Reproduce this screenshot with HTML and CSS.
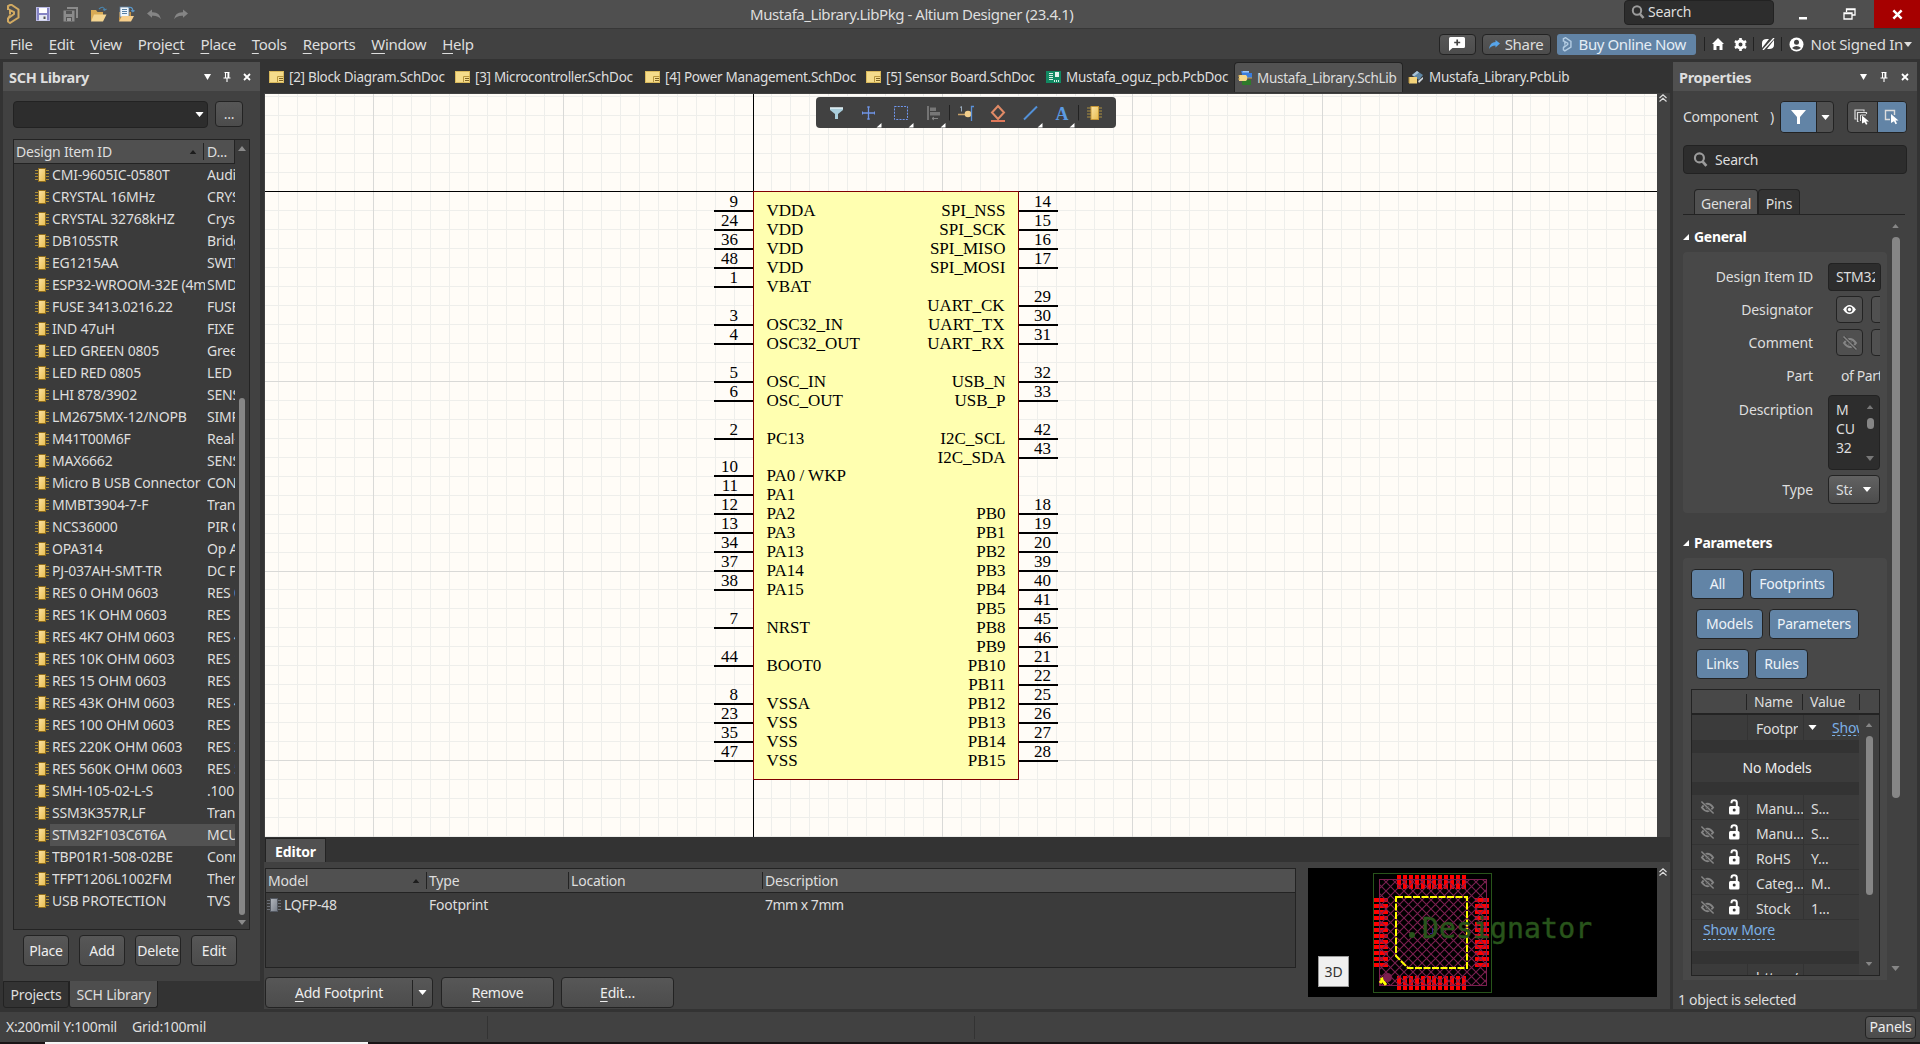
FILE: index.html
```html
<!DOCTYPE html>
<html lang="en">
<head>
<meta charset="utf-8">
<title>Mustafa_Library.LibPkg - Altium Designer (23.4.1)</title>
<link rel="stylesheet" href="styles.css">
</head>
<body>
<svg width="0" height="0" class="defs">
  <defs>
    <linearGradient id="gold" x1="0" y1="0" x2="1" y2="1"><stop offset="0" stop-color="#fbe3a4"/><stop offset="1" stop-color="#e9bd4e"/></linearGradient>
    <linearGradient id="steel" x1="0" y1="0" x2="1" y2="1"><stop offset="0" stop-color="#b4b8bf"/><stop offset="1" stop-color="#777d88"/></linearGradient>
    <pattern id="hatch" width="9" height="9" patternUnits="userSpaceOnUse"><path d="M0 0l9 9M9 0l-9 9" stroke="#7b1f50" stroke-width="1.1"/></pattern>
    <symbol id="chip" viewBox="0 0 14 14"><path d="M0 2.5h14M0 5.5h14M0 8.5h14M0 11.5h14" stroke="#a98b35"/><rect x="3.5" y=".5" width="7" height="13" fill="url(#gold)" stroke="#8f6d1d"/></symbol>
    <symbol id="chipgrey" viewBox="0 0 14 14"><path d="M0 2.5h14M0 5.5h14M0 8.5h14M0 11.5h14" stroke="#6b6f77"/><rect x="3.5" y=".5" width="7" height="13" fill="url(#steel)" stroke="#555a63"/></symbol>
    <symbol id="doc" viewBox="0 0 15 12"><rect x=".5" y=".5" width="14" height="11" fill="#f5dc8b" stroke="#d9b95c"/><path d="M8.500 11V5.500h6" fill="none" stroke="#b8963c"/><path d="M10 7.500h4M10 9.500h4" stroke="#7e6324"/></symbol>
    <symbol id="mag" viewBox="0 0 14 14"><circle cx="6" cy="5.500" r="4.200" fill="none" stroke="#9b9b9b" stroke-width="2"/><path d="M9 9l3.500 4" stroke="#9b9b9b" stroke-width="2.600"/></symbol>
    <symbol id="pin" viewBox="0 0 8 10"><path d="M1.500 .5h5M2.500 .5v5M5 .5v5.500M5.800 .5v5.500M.5 6h7M4 6v4" stroke="#fff" stroke-width="1.100" fill="none"/></symbol>
    <symbol id="close" viewBox="0 0 8 8"><path d="M1 1l6 6M7 1l-6 6" stroke="#fff" stroke-width="1.800"/></symbol>
    <symbol id="down" viewBox="0 0 10 6"><path d="M0 0h10l-5 6z" fill="currentColor"/></symbol>
    <symbol id="up" viewBox="0 0 10 6"><path d="M0 6h10l-5 -6z" fill="currentColor"/></symbol>
    <symbol id="eyeoff" viewBox="0 0 16 16"><path d="M2 8q6 -8 12 0q-6 8 -12 0z" fill="none" stroke="#858585" stroke-width="2"/><circle cx="8" cy="8" r="2" fill="#858585"/><path d="M2 2l12.500 12.500" stroke="#3b3b3b" stroke-width="3"/><path d="M1.500 1.500l13 13" stroke="#858585" stroke-width="1.600"/></symbol>
    <symbol id="eye" viewBox="0 0 14 12"><path d="M0 6q7 -10 14 0q-7 10 -14 0z" fill="#fff"/><circle cx="7" cy="6" r="3.300" fill="#505050"/><circle cx="7" cy="6" r="1.800" fill="#fff"/></symbol>
    <symbol id="lock" viewBox="0 0 12 16"><rect x="1" y="7" width="10.500" height="8.500" rx="1.500" fill="#fff"/><path d="M3.500 4.200V3.500q0-2.300 2.600-2.300t2.700 2.300V8" fill="none" stroke="#fff" stroke-width="2"/><circle cx="6.200" cy="11" r="1.500" fill="#333"/></symbol>
    <symbol id="chev" viewBox="0 0 8 8"><path d="M.5 4L4 .8 7.500 4M.5 7.500L4 4.300 7.500 7.500" stroke="#ddd" stroke-width="1.200" fill="none"/></symbol>
    <symbol id="fold" viewBox="0 0 7 7"><path d="M7 0v7H0z" fill="#fff"/></symbol>
    <symbol id="logo" viewBox="0 0 14 20"><path d="M2 6V2l3-1.500 7.500 5v8L4 19l-2-1.500v-3l6-4.500V8L4 6v4.500M2 14.500l2-3" fill="none" stroke="currentColor" stroke-width="2"/></symbol>
  </defs>
</svg>

<header class="titlebar">
  <div class="quick">
    <svg class="q-logo" width="14" height="20"><use href="#logo"/></svg>
    <svg width="14" height="14" viewBox="0 0 14 14"><rect x=".5" y=".5" width="13" height="13" fill="#8584c4" stroke="#b9b9e4"/><rect x="3" y="1" width="8" height="5" fill="#fff"/><rect x="3" y="8" width="8" height="5.500" fill="#e6e9f5"/><path d="M7.500 9.500v2.500h2v-2.500z" fill="#555"/></svg>
    <svg width="15" height="16" viewBox="0 0 15 16"><path d="M4 1h11v11h-2V3H4z" fill="#8b8b8b"/><rect x=".5" y="4.500" width="11" height="11" fill="#8b8b8b"/><path d="M3 5h6v3H3zM3 11h6v4H3z" fill="#555"/><path d="M4 12h4v3H4z" fill="#999"/></svg>
    <svg width="17" height="16" viewBox="0 0 17 16"><path d="M1 15V4h5l1.500 2H13v3" fill="#d9aa55"/><path d="M1 15.500L4 8.500h12.500L13 15.500z" fill="#f4d592"/><path d="M9 3q4-4 6 1l1.500-1M15 4.500l-2-1" fill="none" stroke="#4a86b0" stroke-width="1.100"/></svg>
    <svg width="17" height="16" viewBox="0 0 17 16"><path d="M1 15V6h12v5" fill="#c99443"/><rect x="2" y="1" width="9" height="10" fill="#eef5fb" stroke="#5c7c9c" stroke-width=".8"/><path d="M4 3.500h5M4 5.500h5M4 7.500h5" stroke="#5680a5"/><path d="M1 15.500l3-5.500h12L13 15.500z" fill="#f7cf8c"/><path d="M10.500 1.500q4-1.500 4.500 4l1.500-1M15 5.500l-2-1" fill="none" stroke="#5b9bd0" stroke-width="1.100"/></svg>
    <svg width="15" height="11" viewBox="0 0 15 11"><path d="M0 4.500L5 .5v2.800q7.500-.5 9 7-3-4-9-3.500v2z" fill="#858585"/></svg>
    <svg width="15" height="11" viewBox="0 0 15 11"><path d="M15 4.500L10 .5v2.800q-7.500-.5-9 7 3-4 9-3.500v2z" fill="#858585"/></svg>
  </div>
  <div class="apptitle">Mustafa_Library.LibPkg - Altium Designer (23.4.1)</div>
  <div class="winctl">
    <div class="tsearch"><svg width="14" height="14"><use href="#mag"/></svg>Search</div>
    <svg class="wmin" width="8" height="3"><rect width="8" height="2.500" fill="#fff"/></svg>
    <svg class="wres" width="13" height="12" viewBox="0 0 13 12"><path d="M3.500 4V1h8.500v6H9M3.500 1.500H12M1 5h8v6H1zM1 5.500h8" fill="none" stroke="#fff" stroke-width="1.300"/></svg>
    <div class="wclose"><svg width="11" height="11" viewBox="0 0 8 8"><use href="#close"/></svg></div>
  </div>
</header>

<nav class="menubar">
  <div class="menu"><span><u>F</u>ile</span><span><u>E</u>dit</span><span><u>V</u>iew</span><span>Proje<u>c</u>t</span><span><u>P</u>lace</span><span><u>T</u>ools</span><span><u>R</u>eports</span><span><u>W</u>indow</span><span><u>H</u>elp</span></div>
  <div class="account">
    <div class="btn note"><svg width="16" height="14" viewBox="0 0 16 14"><path d="M1.500 0h13q1.500 0 1.500 1.500v8q0 1.500-1.500 1.500H3.500L0 14V1.500Q0 0 1.500 0z" fill="#fff"/><path d="M8.200 2.500v6M5.200 5.500h6" stroke="#444" stroke-width="1.700"/></svg></div>
    <div class="btn share"><svg width="11" height="9" viewBox="0 0 11 9"><path d="M11 3.500L6.500 0v2Q1 2 0 9q2-3.500 6.500-3.500v2z" fill="#57a5ea"/></svg>Share</div>
    <div class="buy"><svg width="10" height="15" color="#b3cce2"><use href="#logo"/></svg>Buy Online Now</div>
    <i class="vsep"></i>
    <svg width="12" height="12" viewBox="0 0 12 12"><path d="M6 0l6 6h-1.500v6H7.500V8h-3v4h-3V6H0z" fill="#fff"/></svg>
    <svg class="gear" width="13" height="13" viewBox="0 0 13 13"><circle cx="6.500" cy="6.500" r="3.500" fill="none" stroke="#fff" stroke-width="3"/><path d="M6.500 0v3M6.500 10v3M.9 3.200l2.500 1.500M9.600 8.300l2.500 1.500M.9 9.800l2.500-1.500M9.600 4.700l2.500-1.500" stroke="#fff" stroke-width="2.600"/></svg>
    <i class="vsep"></i>
    <svg width="14" height="12" viewBox="0 0 14 12"><path d="M1 9V5q0-4 5-4l2 0-7 9zM13 3v4q0 4-5 4H6l7-9z" fill="#fff"/><path d="M2 12L13 0" stroke="#fff" stroke-width="1.300"/></svg>
    <i class="vsep"></i>
    <svg width="15" height="15" viewBox="0 0 15 15"><circle cx="7.500" cy="7.500" r="7" fill="#fff"/><circle cx="7.500" cy="5.200" r="2.500" fill="#414141"/><path d="M3 11q4.500-4 9 0-4.500 3.500-9 0z" fill="#414141"/></svg>
    <span class="signed">Not Signed In</span><svg width="8" height="5" viewBox="0 0 10 6"><use href="#down"/></svg>
  </div>
</nav>

<main class="work">
  <aside class="left">
    <section class="panel">
      <div class="phead"><b>SCH Library</b><svg width="7" height="6" viewBox="0 0 10 6" preserveAspectRatio="none"><path d="M0 0h10l-5 6z" fill="#fff"/></svg><svg width="8" height="10"><use href="#pin"/></svg><svg width="8" height="8"><use href="#close"/></svg></div>
      <div class="combo-row"><div class="combo"><svg width="9" height="5" viewBox="0 0 10 6"><use href="#down"/></svg></div><div class="btn dots">...</div></div>
      <div class="list">
        <div class="lmain">
          <div class="lhead"><span class="c1">Design Item ID<svg width="8" height="4" viewBox="0 0 10 6"><use href="#up"/></svg></span><span class="c2">D...</span></div>
          <div id="items"></div>
        </div>
        <div class="lscroll"><svg width="8" height="5" viewBox="0 0 10 6"><use href="#up"/></svg><i></i><svg width="8" height="5" viewBox="0 0 10 6"><use href="#down"/></svg></div>
      </div>
      <div class="lbtns"><div class="btn">Place</div><div class="btn">Add</div><div class="btn">Delete</div><div class="btn">Edit</div></div>
    </section>
    <div class="ptabs"><span>Projects</span><span class="on">SCH Library</span></div>
  </aside>

  <section class="center">
    <div class="doctabs">
      <span class="t1"><svg width="15" height="12"><use href="#doc"/></svg><em>[2] Block Diagram.SchDoc</em></span>
      <span class="t2"><svg width="15" height="12"><use href="#doc"/></svg><em>[3] Microcontroller.SchDoc</em></span>
      <span class="t3"><svg width="15" height="12"><use href="#doc"/></svg><em>[4] Power Management.SchDoc</em></span>
      <span class="t4"><svg width="15" height="12"><use href="#doc"/></svg><em>[5] Sensor Board.SchDoc</em></span>
      <span class="t5"><svg width="15" height="12" viewBox="0 0 15 12"><rect width="15" height="12" fill="#128a63"/><path d="M3 2.500h4M3 4.500h4M3 6.500h4M3 8.500h4" stroke="#d9efe6"/><path d="M9 1h4v5H9z" fill="#e5f2ec"/><path d="M8.500 9v2M10.500 9v2M12.500 9v2" stroke="#d9efe6"/></svg><em>Mustafa_oguz_pcb.PcbDoc</em></span>
      <span class="t6 on"><svg width="15" height="16" viewBox="0 0 15 16"><path d="M3 1h8v2h3v5H5z" fill="#3b7ddd"/><path d="M5 1h6v1.500H4z" fill="#9cc6f5"/><path d="M4 10h9v5H4z" fill="#2f7a2b"/><path d="M1 5h7q3 3 0 6H1z" fill="#f6d88a"/><path d="M0 6h2M0 9h2M10 8h4" stroke="#c9a24a"/></svg><em>Mustafa_Library.SchLib</em></span>
      <span class="t7"><svg width="16" height="14" viewBox="0 0 16 14"><path d="M4 5l5-4 6 4-4 5z" fill="#5f86a3"/><path d="M4 5l5-4 2 1.500-5 4z" fill="#a9c3d6"/><path d="M10 11l5-4v2l-4 4z" fill="#cfd8dd"/><rect x="1" y="7" width="8" height="6.500" fill="#f3d37a"/><path d="M0 8h2M0 10h2M0 12h2" stroke="#b58f3a"/></svg><em>Mustafa_Library.PcbLib</em></span>
    </div>
    <div class="sheet">
      <svg id="canvas" width="1392" height="743" viewBox="265 94 1392 743"></svg>
      <svg class="chev" width="8" height="8"><use href="#chev"/></svg>
      <div class="toolbar">
        <svg width="300" height="32" viewBox="0 0 300 32">
          <path d="M14 11h13v2l-5 4v5h-3v-5l-5-4z" fill="#a9cddb"/><path d="M14 11h13" stroke="#e6f3f8" stroke-width="1.500"/>
          <path d="M46 16h13M52.500 9.500v13" stroke="#6f94e6" stroke-width="1.300"/><path d="M46.500 14.500v3M58.500 14.500v3M51 10h3M51 22h3" stroke="#6f94e6"/>
          <rect x="78.500" y="9.500" width="13" height="13" fill="none" stroke="#7097ee" stroke-dasharray="2 1.200"/>
          <path d="M112 9v14" stroke="#858585" stroke-width="1.500"/><rect x="114" y="10.500" width="6" height="3.500" fill="#777"/><rect x="114" y="15" width="10" height="3.500" fill="#777"/><path d="M116 21.500h6M118 20l-2 1.500 2 1.500" fill="none" stroke="#858585"/>
          <path d="M133.500 8v15.500M262.500 8v15.500" stroke="#222"/>
          <path d="M142 17.500h8" stroke="#c9a268" stroke-width="1.500"/><circle cx="152" cy="17" r="3.300" fill="#f3cf8c"/><path d="M158 9.500h-2.500v14.500" fill="none" stroke="#5a90d8" stroke-width="1.300"/><path d="M144 10.500l1.500-1v5" fill="none" stroke="#9ab"/>
          <path d="M182 9l6 6.500-6 6.500-6-6.500z" fill="none" stroke="#e08a66" stroke-width="2"/><path d="M175 24h14" stroke="#e0785a" stroke-width="2"/>
          <path d="M208 22.500l13-13" stroke="#5290d8" stroke-width="2"/>
          <text x="246" y="23" text-anchor="middle" class="tool-a">A</text>
          <path d="M271 11h15M271 14h15M271 17h15M271 20h15" stroke="#ad9140"/><rect x="275" y="9.500" width="7.500" height="13" fill="url(#gold)" stroke="#c79837"/>
          <path d="M65.500 26v4.500h-5zM97.500 26v4.500h-5zM129.500 26v4.500h-5zM226.500 26v4.500h-5zM258.500 26v4.500h-5z" fill="#fff"/>
        </svg>
      </div>
    </div>
    <div class="edtabs"><b>Editor</b></div>
    <div class="editor">
      <div class="models">
        <div class="mtable">
          <div class="mhead"><span class="m1">Model<svg width="8" height="4" viewBox="0 0 10 6"><use href="#up"/></svg></span><span class="m2">Type</span><span class="m3">Location</span><span class="m4">Description</span></div>
          <div class="mrow"><span class="m1"><svg width="14" height="14"><use href="#chipgrey"/></svg>LQFP-48</span><span class="m2">Footprint</span><span class="m3"></span><span class="m4">7mm x 7mm</span></div>
        </div>
        <div class="mbtns"><div class="btn addfp"><span><u>A</u>dd Footprint</span><i><svg width="9" height="5" viewBox="0 0 10 6"><use href="#down"/></svg></i></div><div class="btn"><span><u>R</u>emove</span></div><div class="btn"><span><u>E</u>dit...</span></div></div>
      </div>
      <div class="preview"><svg id="footprint" width="349" height="129" viewBox="1308 868 349 129"></svg><span class="td">3D</span></div>
      <svg class="chev" width="8" height="8"><use href="#chev"/></svg>
    </div>
  </section>

  <aside class="right">
    <div class="phead"><b>Properties</b><svg width="7" height="6" viewBox="0 0 10 6" preserveAspectRatio="none"><path d="M0 0h10l-5 6z" fill="#fff"/></svg><svg width="8" height="10"><use href="#pin"/></svg><svg width="8" height="8"><use href="#close"/></svg></div>
    <div class="scope"><span class="comp">Component</span><span class="par">)</span>
      <div class="split f"><i class="blue"><svg width="15" height="14" viewBox="0 0 15 14"><path d="M0 0h15L9 7v7H6V7z" fill="#fff"/></svg></i><i><svg width="9" height="5" viewBox="0 0 10 6"><use href="#down"/></svg></i></div>
      <div class="split s"><i><svg width="16" height="16" viewBox="0 0 16 16"><path d="M2.500 10H1V1h9v1.500M4.500 12.500H3.500V3.500h9v1.500" fill="none" stroke="#ddd" stroke-width="1.200"/><path d="M6.500 12V6H12" fill="none" stroke="#ddd"/><path d="M8 6.500l7 6h-3l1.500 2.500-1.500.8-1.500-2.500L8 14.500z" fill="#fff"/></svg></i><i class="blue"><svg width="16" height="16" viewBox="0 0 16 16"><path d="M6 10.500H1.500V1.500h9V6" fill="none" stroke="#ddd" stroke-width="1.400"/><path d="M7 5l7.500 6.500h-3l1.500 3-1.500.8-1.500-3L7 14z" fill="#fff"/></svg></i></div>
    </div>
    <div class="psearch"><svg width="15" height="15" viewBox="0 0 14 14"><use href="#mag"/></svg>Search</div>
    <div class="rtabs"><span class="on">General</span><span>Pins</span></div>
    <div class="rbody">
      <div class="rcols">
        <h3><svg width="6" height="6" viewBox="0 0 7 7"><use href="#fold"/></svg>General</h3>
        <div class="box form">
          <div class="fr"><label>Design Item ID</label><div class="inp">STM32F103</div></div>
          <div class="fr"><label>Designator</label><div class="clip"><i class="sq"><svg width="13" height="11" viewBox="0 0 14 12"><use href="#eye"/></svg></i><i class="sq"><svg width="12" height="16"><use href="#lock"/></svg></i></div></div>
          <div class="fr"><label>Comment</label><div class="clip"><i class="sq"><svg width="16" height="16" viewBox="0 0 16 16"><use href="#eyeoff"/></svg></i><i class="sq"><svg width="12" height="16"><use href="#lock"/></svg></i></div></div>
          <div class="fr"><label>Part</label><div class="clip ofp">of Parts</div></div>
          <div class="fr tall"><label>Description</label><div class="area"><span>M<br>CU<br>32</span><div class="mini"><svg width="8" height="4" viewBox="0 0 10 6"><use href="#up"/></svg><i></i><svg width="8" height="5" viewBox="0 0 10 6"><use href="#down"/></svg></div></div></div>
          <div class="fr"><label>Type</label><div class="sel"><span>Standard</span><svg width="10" height="5" viewBox="0 0 10 6"><use href="#down"/></svg></div></div>
        </div>
        <h3 class="second"><svg width="6" height="6" viewBox="0 0 7 7"><use href="#fold"/></svg>Parameters</h3>
        <div class="box params">
          <div class="chips r1"><b class="w53">All</b><b class="w84">Footprints</b></div>
          <div class="chips"><b class="w67">Models</b><b class="w90">Parameters</b></div>
          <div class="chips"><b class="w53">Links</b><b class="w53">Rules</b></div>
          <div class="ptable">
            <div class="pth"><span></span><span>Name</span><span>Value</span><span></span></div>
            <div class="ptb">
              <div class="ptrows">
                <div class="pr fp"><span class="a"></span><span class="n"><em>Footprint</em></span><span class="v"><svg width="9" height="5" viewBox="0 0 10 6"><use href="#down"/></svg><a>Show</a></span></div>
                <div class="nom">No Models</div>
                <div id="params"></div>
                <div class="more"><a>Show More</a></div>
                <div class="pr last"><span class="a"></span><span class="n">https:/...</span><span class="v">:...</span></div>
              </div>
              <div class="pscroll"><svg width="8" height="4" viewBox="0 0 10 6"><use href="#up"/></svg><i></i><svg width="8" height="4" viewBox="0 0 10 6"><use href="#down"/></svg></div>
            </div>
          </div>
        </div>
      </div>
      <div class="rscroll"><svg width="9" height="4" viewBox="0 0 10 6"><use href="#up"/></svg><i></i><svg width="9" height="5" viewBox="0 0 10 6"><use href="#down"/></svg></div>
    </div>
    <div class="selinfo">1 object is selected</div>
  </aside>
</main>

<footer class="status"><span class="xy">X:200mil Y:100mil</span><span class="gr">Grid:100mil</span><i></i><i class="i2"></i><div class="btn">Panels</div></footer>
<div class="strip"><i></i></div>
<script src="script.js"></script>
</body>
</html>
```
FILE: styles.css
```css
* { box-sizing: border-box; }
body { margin: 0; width: 1920px; height: 1044px; overflow: hidden; background: #333; color: #dedede; font: 14px/20px "Noto Sans", "Open Sans", sans-serif; letter-spacing: -.2px; display: flex; flex-direction: column; }
.defs { position: absolute; }
svg { display: block; flex: none; }
i, em { font-style: normal; }
span, em, b, label { white-space: nowrap; }
u { text-decoration: underline; text-underline-offset: 3px; text-decoration-skip-ink: none; }
.btn { display: flex; align-items: center; justify-content: center; background: linear-gradient(#575757, #4c4c4c); border: 1px solid #232323; border-radius: 4px; }

.titlebar { height: 29px; flex: none; background: #4f4f4f; border-bottom: 1px solid #373737; display: grid; grid-template-columns: 750px 1fr 296px; }
.quick { display: flex; align-items: center; padding-left: 6px; gap: 13px; height: 28px; }
.q-logo { color: #d2aa62; margin-right: 3px; }
.quick svg:nth-child(3) { margin-right: -1px; }
.quick svg:nth-child(4) { margin-right: -2px; }
.quick svg:nth-child(n+6) { margin-left: -1px; margin-right: -1px; }
.apptitle { font-size: 15px; line-height: 29px; letter-spacing: -.45px; }
.winctl { display: flex; align-items: center; height: 28px; }
.winctl > * { flex: none; }
.tsearch { width: 150px; height: 25px; background: #2d2d2d; border: 1px solid #222; border-radius: 4px; margin-top: -4px; display: flex; align-items: center; gap: 3px; padding-left: 6px; }
.wmin { margin: 8px 0 0 25px; }
.wres { margin-left: 36px; }
.wclose { margin-left: 18px; width: 46px; height: 28px; background: #a60000; display: flex; align-items: center; justify-content: center; }

.menubar { height: 30px; flex: none; background: #414141; display: flex; justify-content: space-between; align-items: center; }
.menu { display: flex; gap: 16px; padding-left: 10px; font-size: 15px; letter-spacing: -.33px; }
.account { display: flex; align-items: center; height: 30px; padding-right: 8px; font-size: 15px; letter-spacing: -.3px; }
.note { width: 37px; height: 21px; margin-right: 6px; }
.share { width: 69px; height: 21px; gap: 5px; margin-right: 6px; }
.buy { width: 139px; height: 21px; border-radius: 3px; background: #6284a6; display: flex; align-items: center; gap: 7px; padding-left: 5px; margin-right: 8px; color: #e4edf5; letter-spacing: -.4px; }
.vsep { width: 1px; height: 14px; background: #222; margin-right: 7px; }
.account > svg { margin-right: 6px; }
.gear { margin-left: 4px; }
.account > svg:last-child { margin: 0; }
.signed { margin-left: 1px; margin-right: 1px; }

.work { height: 953px; flex: none; display: flex; padding: 3px 3px 0; }
.left { width: 257px; margin-right: 4px; flex: none; }
.panel { background: #414141; height: 919px; }
.phead { height: 29px; background: #505050; display: flex; align-items: center; padding: 0 9px 0 6px; gap: 12px; }
.phead b { font-size: 14.5px; letter-spacing: -.3px; flex: 1; }
.combo-row { display: flex; gap: 7px; padding: 10px 0 0 10px; }
.combo { width: 195px; height: 27px; background: #2d2d2d; border: 1px solid #222; border-radius: 4px; display: flex; align-items: center; justify-content: flex-end; padding-right: 3px; color: #fff; }
.dots { width: 28px; height: 26px; }
.list { margin: 11px 0 0 10px; width: 237px; height: 791px; border: 1px solid #232323; background: #3b3b3b; display: flex; }
.lmain { width: 221px; }
.lhead { height: 24px; background: #505050; border-right: 1px solid #232323; border-bottom: 1px solid #232323; display: flex; align-items: center; }
.lhead .c1 { width: 190px; padding: 0 6px 0 2px; border-right: 1px solid #232323; display: flex; align-items: center; justify-content: space-between; height: 17px; color: #dedede; }
.lhead .c1 svg, .m1 svg:last-child { color: #1d1d1d; }
.lhead .c2 { padding-left: 3px; }
.item { height: 22px; display: flex; align-items: center; }
.item svg { margin: 0 1px 0 21px; }
.item div { display: flex; width: 185px; height: 22px; line-height: 22px; padding-left: 2px; }
.item.current div { background: #525252; }
.item span { display: block; overflow: hidden; }
.item .d1 { width: 153px; margin-right: 2px; }
.item .d2 { width: 28px; }
.lscroll { width: 14px; display: flex; flex-direction: column; align-items: center; color: #8a8a8a; padding-top: 6px; }
.lscroll i { width: 6px; height: 517px; border-radius: 3px; background: #868686; margin: 247px 0 5px; }
.lbtns { display: flex; gap: 10px; padding: 5px 0 0 20px; }
.lbtns .btn { width: 46px; height: 31px; color: #eee; }
.ptabs { display: flex; height: 27px; }
.ptabs span { width: 66px; border: 1px solid #222; border-radius: 0 0 3px 3px; display: flex; align-items: center; justify-content: center; background: #333; height: 27px; padding-top: 1px; }
.ptabs .on { width: 89px; background: #4e4e4e; border-top: 0; }

.center { width: 1406px; margin-right: 3px; flex: none; }
.doctabs { height: 31px; display: flex; }
.doctabs span { display: flex; align-items: center; gap: 5px; padding-left: 5px; height: 30px; flex: none; }
.doctabs em { font-size: 13.5px; letter-spacing: -.3px; }
.t1 { width: 186px; } .t2 { width: 190px; } .t3 { width: 221px; } .t4 { width: 180px; } .t5 { width: 193px; } .t6 { width: 169px; } .t7 { width: 175px; }
.doctabs .on { background: #525252; border: 1px solid #232323; border-bottom: 0; border-radius: 4px 4px 0 0; gap: 4px; padding-left: 3px; }
.sheet { height: 744px; display: flex; background: #414141; padding: 1px 0 0 1px; position: relative; }
#canvas { background: #fffcf7; }
.chev { margin: 0 0 0 2px; }
.toolbar { position: absolute; left: 552px; top: 4px; width: 300px; height: 31px; background: #414141; border-radius: 4px; }
.tool-a { font: bold 18px "Liberation Serif", serif; fill: #5b9ae2; }
.grid { stroke: #eeeeeb; }
.major { stroke: #d9d9d7; }
.body { fill: #ffffb0; stroke: #800000; }
.axis { stroke: #000; }
.pinline { stroke: #000; stroke-width: 2; }
.sch { font: 17px "Liberation Serif", serif; letter-spacing: 0; fill: #000; }
.edtabs { height: 25px; display: flex; padding: 1px 0 0 1px; }
.edtabs b { width: 61px; background: #505050; border: 1px solid #232323; border-bottom: 0; text-align: center; line-height: 25px; color: #fff; letter-spacing: -.2px; }
.editor { height: 147px; background: #414141; padding: 6px 0 0 1px; display: flex; }
.models { width: 1031px; margin-right: 12px; }
.mtable { height: 100px; border: 1px solid #232323; background: #3b3b3b; }
.mhead { height: 24px; background: #505050; border-bottom: 1px solid #232323; display: flex; align-items: center; }
.mhead span { height: 17px; line-height: 17px; padding-left: 2px; }
.mhead .m1, .mhead .m2, .mhead .m3 { border-right: 1px solid #232323; }
.m1 { width: 161px; display: flex; align-items: center; }
.mhead .m1 { justify-content: space-between; padding-right: 6px; }
.m2 { width: 142px; } .m3 { width: 194px; }
.mrow { display: flex; align-items: center; height: 23px; }
.mrow span { padding-left: 2px; }
.mrow .m1 { padding-left: 1px; gap: 3px; }
.mrow .m4 { letter-spacing: -.5px; }
.mbtns { display: flex; gap: 8px; padding-top: 9px; }
.mbtns .btn { width: 113px; height: 31px; color: #eee; }
.mbtns .addfp { width: 168px; }
.mbtns .btn:last-child { margin-left: -1px; }
.addfp span { flex: 1; text-align: center; }
.addfp i { width: 20px; height: 26px; border-left: 1px solid #232323; display: flex; align-items: center; justify-content: center; color: #fff; }
.preview { width: 349px; height: 129px; background: #000; position: relative; }
.td { position: absolute; left: 10px; top: 88px; width: 31px; height: 31px; background: #f0f0f0; border: 1px solid #999; color: #333; text-align: center; line-height: 29px; }
.desig { font: 28px "DejaVu Sans Mono", monospace; letter-spacing: 0; fill: #28541b; stroke: #28541b; stroke-width: .5; }

.right { width: 244px; background: #414141; height: 947px; flex: none; }
.right .phead { padding-right: 8px; gap: 13px; }
.scope { display: flex; align-items: center; padding: 10px 0 0 10px; height: 42px; }
.comp { width: 87px; letter-spacing: -.3px; } .par { width: 10px; }
.split { display: flex; border: 1px solid #232323; border-radius: 4px; background: #505050; height: 32px; color: #fff; overflow: hidden; }
.split i { display: flex; align-items: center; justify-content: center; flex: 1; }
.split .blue { background: #6284a6; border-right: 1px solid #232323; }
.f { width: 54px; } .f .blue { flex: 0 0 36px; }
.s { width: 60px; margin-left: 13px; } .s .blue { border-right: 0; border-left: 1px solid #232323; }
.psearch { margin: 12px 0 0 10px; width: 224px; height: 29px; background: #2d2d2d; border: 1px solid #222; border-radius: 4px; display: flex; align-items: center; gap: 7px; padding-left: 9px; }
.rtabs { margin: 15px 0 0 10px; width: 222px; height: 26px; border-bottom: 1px solid #232323; display: flex; padding-left: 11px; }
.rtabs span { border: 1px solid #232323; border-bottom: 0; border-radius: 4px 4px 0 0; width: 42px; background: #333; text-align: center; line-height: 27px; height: 25px; }
.rtabs .on { width: 64px; background: #505050; }
.rbody { display: flex; height: 765px; overflow: hidden; }
.rcols { width: 214px; padding-left: 10px; height: 765px; overflow: hidden; flex: none; }
h3 { margin: 0; height: 37px; display: flex; align-items: center; gap: 5px; font-size: 14px; color: #fff; padding-top: 6px; letter-spacing: -.3px; }
h3.second { height: 45px; padding-top: 14px; }
.box { width: 204px; background: #484848; border-radius: 4px; }
.form { height: 261px; padding-top: 8px; }
.fr { display: flex; height: 33px; align-items: center; }
.fr label { width: 130px; text-align: right; margin-right: 15px; flex: none; letter-spacing: -.1px; }
.inp { width: 52px; height: 28px; background: #2d2d2d; border: 1px solid #222; border-radius: 4px; overflow: hidden; padding: 0 0 0 7px; line-height: 26px; border-right: 5px solid #2d2d2d; box-shadow: 1px 0 #222; white-space: nowrap; }
.clip { width: 52px; overflow: hidden; display: flex; padding-left: 8px; gap: 8px; }
.ofp { padding-left: 13px; white-space: nowrap; letter-spacing: -.4px; }
.sq { width: 27px; height: 27px; flex: none; border: 1px solid #232323; border-radius: 4px; display: flex; align-items: center; justify-content: center; background: #505050; }
.fr.tall { height: 81px; align-items: flex-start; padding-top: 3px; }
.tall label { padding-top: 5px; }
.area { width: 52px; height: 75px; background: #2d2d2d; border: 1px solid #222; border-radius: 4px; padding: 4px 5px 0 7px; display: flex; justify-content: space-between; line-height: 19px; }
.mini { display: flex; flex-direction: column; align-items: center; color: #777; padding-top: 5px; }
.mini i { width: 7px; height: 11px; border-radius: 4px; background: #868686; margin: 9px 0 27px; }
.sel { width: 52px; height: 29px; border: 1px solid #232323; border-radius: 4px; background: linear-gradient(#626262, #4c4c4c); display: flex; align-items: center; justify-content: space-between; padding: 0 7px; color: #fff; }
.sel span { width: 16px; overflow: hidden; color: #dedede; }
.params { height: 430px; padding: 11px 0 0 8px; }
.chips { display: flex; gap: 6px; margin-bottom: 10px; padding-left: 5px; }
.chips.r1 { padding-left: 0; }
.chips b { height: 30px; background: #6284a6; border: 1px solid #232323; border-radius: 4px; font-weight: 400; color: #eef3f8; text-align: center; line-height: 28px; }
.w53 { width: 53px; } .w84 { width: 84px; } .w67 { width: 67px; } .w90 { width: 90px; }
.ptable { width: 189px; border: 1px solid #232323; background: #333; height: 287px; overflow: hidden; }
.pth { height: 25px; background: #484848; border-bottom: 2px solid #232323; display: grid; grid-template-columns: 55px 56px 57px 1fr; align-items: center; }
.pth span { border-right: 1px solid #232323; height: 16px; line-height: 16px; padding-left: 7px; }
.pth span:last-child { border: 0; }
.ptb { display: flex; height: 261px; }
.ptrows { width: 168px; overflow: hidden; }
.pr { display: flex; height: 25px; background: #3b3b3b; border-bottom: 1px solid #333; }
.pr span { display: block; line-height: 28px; overflow: hidden; }
.pr .a { width: 55px; display: flex; align-items: center; gap: 13px; padding-left: 8px; flex: none; }
.pr .n { width: 57px; border-left: 1px solid #333; border-right: 1px solid #333; padding-left: 8px; flex: none; }
.pr .v { padding-left: 7px; }
.pr.fp { height: 26px; margin-bottom: 12px; }
.fp em { display: block; width: 42px; overflow: hidden; }
.pr.fp .v { display: flex; align-items: center; gap: 15px; color: #fff; padding-left: 4px; }
a { color: #7cb0e6; border-bottom: 1px dashed #7cb0e6; line-height: 15px; }
.nom { height: 29px; line-height: 29px; background: #3b3b3b; text-align: center; margin-bottom: 13px; padding-left: 3px; color: #eee; }
.more { height: 31px; background: #3b3b3b; padding: 0 0 0 11px; margin-bottom: 13px; line-height: 20px; }
.pscroll { width: 20px; background: #3f3f3f; display: flex; flex-direction: column; align-items: center; padding-top: 8px; color: #868686; }
.pscroll i { width: 7px; height: 159px; border-radius: 4px; background: #868686; margin: 9px 0 67px; }
.rscroll { width: 20px; display: flex; flex-direction: column; align-items: center; padding-top: 9px; color: #868686; padding-right: 3px; }
.rscroll i { width: 8px; height: 561px; border-radius: 4px; background: #868686; margin: 9px 0 168px; }
.selinfo { padding: 10px 0 0 5px; letter-spacing: -.3px; }

.status { height: 30px; flex: none; background: #414141; display: flex; align-items: center; padding-left: 6px; }
.xy { width: 126px; letter-spacing: -.3px; } .gr { width: 355px; }
.status i { width: 1px; height: 23px; background: #333; margin-right: 486px; }
.status .i2 { margin-right: 890px; }
.status .btn { width: 51px; height: 23px; color: #eee; }
.strip { height: 2px; background: #1a1416; padding-left: 45px; }
.strip i { display: block; width: 323px; height: 2px; background: #f5f5f5; }
```
FILE: script.js
```js
// Component list of the SCH Library panel
const items = [
  ['CMI-9605IC-0580T', 'Audio'], ['CRYSTAL 16MHz', 'CRYSTAL'], ['CRYSTAL 32768kHZ', 'Crystal'],
  ['DB105STR', 'Bridge'], ['EG1215AA', 'SWITCH'], ['ESP32-WROOM-32E (4mb)', 'SMD'],
  ['FUSE 3413.0216.22', 'FUSE'], ['IND 47uH', 'FIXED'], ['LED GREEN 0805', 'Green'],
  ['LED RED 0805', 'LED'], ['LHI 878/3902', 'SENSOR'], ['LM2675MX-12/NOPB', 'SIMPLE'],
  ['M41T00M6F', 'Real-'], ['MAX6662', 'SENSOR'], ['Micro B USB Connector', 'CONN'],
  ['MMBT3904-7-F', 'Trans'], ['NCS36000', 'PIR C'], ['OPA314', 'Op Amp'],
  ['PJ-037AH-SMT-TR', 'DC P'], ['RES 0 OHM 0603', 'RES 0'], ['RES 1K OHM 0603', 'RES 1'],
  ['RES 4K7 OHM 0603', 'RES 4'], ['RES 10K OHM 0603', 'RES 1'], ['RES 15 OHM 0603', 'RES 1'],
  ['RES 43K OHM 0603', 'RES 4'], ['RES 100 OHM 0603', 'RES 1'], ['RES 220K OHM 0603', 'RES 2'],
  ['RES 560K OHM 0603', 'RES 5'], ['SMH-105-02-L-S', '.100'], ['SSM3K357R,LF', 'Trans'],
  ['STM32F103C6T6A', 'MCU'], ['TBP01R1-508-02BE', 'Conn'], ['TFPT1206L1002FM', 'Therm'],
  ['USB PROTECTION', 'TVS']
];
document.getElementById('items').innerHTML = items.map(([id, d]) =>
  `<div class="item${id.startsWith('STM32') ? ' current' : ''}"><svg width="14" height="14"><use href="#chip"/></svg><div><span class="d1">${id}</span><span class="d2">${d}</span></div></div>`).join('');

// Parameter rows
document.getElementById('params').innerHTML = [['Manu...', 'S...'], ['Manu...', 'S...'], ['RoHS', 'Y...'], ['Categ...', 'M..'], ['Stock', '1...']].map(([n, v]) =>
  `<div class="pr"><span class="a"><svg width="15" height="15" viewBox="0 0 16 16"><use href="#eyeoff"/></svg><svg width="12" height="16" viewBox="0 0 12 16"><use href="#lock"/></svg></span><span class="n">${n}</span><span class="v">${v}</span></div>`).join('');

// Schematic symbol: [pin number, name, grid row]
const leftPins = [[9, 'VDDA', 1], [24, 'VDD', 2], [36, 'VDD', 3], [48, 'VDD', 4], [1, 'VBAT', 5], [3, 'OSC32_IN', 7], [4, 'OSC32_OUT', 8],
  [5, 'OSC_IN', 10], [6, 'OSC_OUT', 11], [2, 'PC13', 13], [10, 'PA0 / WKP', 15], [11, 'PA1', 16], [12, 'PA2', 17], [13, 'PA3', 18],
  [34, 'PA13', 19], [37, 'PA14', 20], [38, 'PA15', 21], [7, 'NRST', 23], [44, 'BOOT0', 25], [8, 'VSSA', 27], [23, 'VSS', 28], [35, 'VSS', 29], [47, 'VSS', 30]];
const rightPins = [[14, 'SPI_NSS', 1], [15, 'SPI_SCK', 2], [16, 'SPI_MISO', 3], [17, 'SPI_MOSI', 4], [29, 'UART_CK', 6], [30, 'UART_TX', 7], [31, 'UART_RX', 8],
  [32, 'USB_N', 10], [33, 'USB_P', 11], [42, 'I2C_SCL', 13], [43, 'I2C_SDA', 14], [18, 'PB0', 17], [19, 'PB1', 18], [20, 'PB2', 19], [39, 'PB3', 20],
  [40, 'PB4', 21], [41, 'PB5', 22], [45, 'PB8', 23], [46, 'PB9', 24], [21, 'PB10', 25], [22, 'PB11', 26], [25, 'PB12', 27], [26, 'PB13', 28], [27, 'PB14', 29], [28, 'PB15', 30]];
const step = 18.975, ox = 753, oy = 191, pinTop = 191.85;
let s = '', major = '';
for (let i = -25; i <= 47; i++) {
  const x = Math.floor(ox + i * step) + .5;
  if (x < 266 || x > 1657) continue;
  const l = `<path class="${i % 10 ? 'grid' : 'major'}" d="M${x} 94V837"/>`;
  i % 10 ? s += l : major += l;
}
for (let i = -5; i <= 34; i++) {
  const y = Math.round(oy + i * step) + .5;
  const l = `<path class="${i % 10 ? 'grid' : 'major'}" d="M265 ${y}H1657"/>`;
  i % 10 ? s += l : major += l;
}
s += major + '<path class="axis" d="M265 191.500H1657M753.500 94V837"/><rect class="body" x="753.500" y="191.500" width="265" height="588"/>';
for (const [n, name, r] of leftPins) {
  const y = Math.round(pinTop + r * step);
  s += `<path class="pinline" d="M714 ${y}H753"/><text class="sch" x="738" y="${y - 4}" text-anchor="end">${n}</text><text class="sch" x="766.500" y="${y + 5}">${name}</text>`;
}
for (const [n, name, r] of rightPins) {
  const y = Math.round(pinTop + r * step);
  const end = name.startsWith('UART') ? 1004.5 : 1005.5;
  s += `<path class="pinline" d="M1019 ${y}H1058"/><text class="sch" x="1034" y="${y - 4}">${n}</text><text class="sch" x="${end}" y="${y + 5}" text-anchor="end">${name}</text>`;
}
document.getElementById('canvas').innerHTML = s;

// LQFP-48 footprint
let f = '';
for (let i = 0; i < 12; i++) {
  const x = 1397 + Math.round(i * 5.9), y = 898 + Math.round(i * 5.93);
  f += `<path fill="#f00" d="M${x} 875h4v14h-4zM${x} 976h4v14h-4zM1374 ${y}h14v4h-14zM1475 ${y}h14v4h-14z"/>`;
}
f += '<rect x="1373.500" y="873.500" width="118" height="119" fill="none" stroke="#28541b"/>' +
  '<rect x="1379.500" y="879.500" width="107" height="106" fill="url(#hatch)" stroke="#7b1f50"/>' +
  '<path d="M1396 897H1467V968H1408L1396 956Z" fill="none" stroke="#ff0" stroke-width="2" stroke-dasharray="7 1.500"/>' +
  '<path d="M1381 978l5 7M1380 983l4-5" stroke="#ff0" stroke-width="3"/><circle cx="1387.500" cy="977.500" r="4.500" fill="#7b1f50"/>' +
  '<path d="M1432.500 928v8M1430 933.500h5" stroke="#33208c"/>' +
  '<circle cx="1412" cy="935" r="3" fill="#28541b"/><text class="desig" x="1422" y="938" textLength="170">Designator</text>';
document.getElementById('footprint').innerHTML = f;
```
